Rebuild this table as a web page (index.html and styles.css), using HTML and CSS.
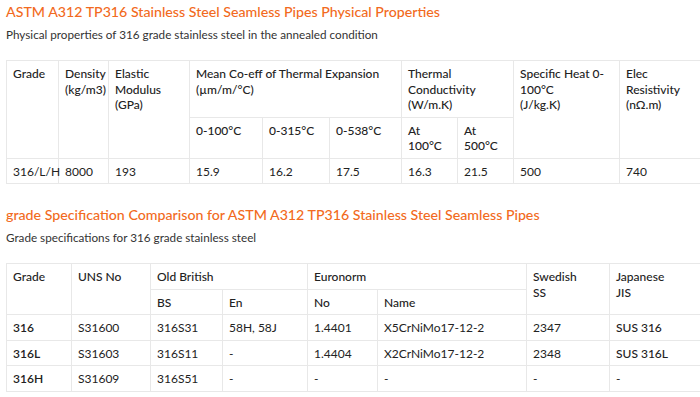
FILE: index.html
```html
<!DOCTYPE html>
<html>
<head>
<meta charset="utf-8">
<link rel="stylesheet" href="styles.css">
</head>
<body>
<section class="block">
  <h2 class="title">ASTM A312 TP316 Stainless Steel Seamless Pipes Physical Properties</h2>
  <p class="sub">Physical properties of 316 grade stainless steel in the annealed condition</p>
  <table class="tbl t1">
    <colgroup>
      <col class="c52"><col class="c50"><col class="c81"><col class="c73"><col class="c67"><col class="c72"><col class="c56"><col class="c56"><col class="c106"><col class="c83">
    </colgroup>
    <tr class="h">
      <th rowspan="2">Grade</th>
      <th rowspan="2">Density<br>(kg/m3)</th>
      <th rowspan="2">Elastic<br>Modulus<br>(GPa)</th>
      <th colspan="3">Mean Co-eff of Thermal Expansion<br>(µm/m/°C)</th>
      <th colspan="2">Thermal<br>Conductivity<br>(W/m.K)</th>
      <th rowspan="2">Specific Heat 0-100°C<br>(J/kg.K)</th>
      <th rowspan="2">Elec<br>Resistivity<br>(nΩ.m)</th>
    </tr>
    <tr class="h">
      <th>0-100°C</th>
      <th>0-315°C</th>
      <th>0-538°C</th>
      <th>At<br>100°C</th>
      <th>At<br>500°C</th>
    </tr>
    <tr>
      <td>316/L/H</td><td>8000</td><td>193</td><td>15.9</td><td>16.2</td><td>17.5</td><td>16.3</td><td>21.5</td><td>500</td><td>740</td>
    </tr>
  </table>
</section>
<section class="block b2">
  <h2 class="title">grade Specification Comparison for ASTM A312 TP316 Stainless Steel Seamless Pipes</h2>
  <p class="sub">Grade specifications for 316 grade stainless steel</p>
  <table class="tbl t2">
    <colgroup>
      <col class="c65"><col class="c79"><col class="c72"><col class="c85"><col class="c70"><col class="c149"><col class="c83"><col class="c93">
    </colgroup>
    <tr class="h">
      <th rowspan="2">Grade</th>
      <th rowspan="2">UNS No</th>
      <th colspan="2">Old British</th>
      <th colspan="2">Euronorm</th>
      <th rowspan="2">Swedish<br>SS</th>
      <th rowspan="2">Japanese<br>JIS</th>
    </tr>
    <tr class="h">
      <th>BS</th><th>En</th><th>No</th><th>Name</th>
    </tr>
    <tr>
      <td class="g">316</td><td>S31600</td><td>316S31</td><td>58H, 58J</td><td>1.4401</td><td>X5CrNiMo17-12-2</td><td>2347</td><td class="j">SUS 316</td>
    </tr>
    <tr>
      <td class="g">316L</td><td>S31603</td><td>316S11</td><td>-</td><td>1.4404</td><td>X2CrNiMo17-12-2</td><td>2348</td><td class="j">SUS 316L</td>
    </tr>
    <tr>
      <td class="g">316H</td><td>S31609</td><td>316S51</td><td>-</td><td>-</td><td>-</td><td>-</td><td>-</td>
    </tr>
  </table>
</section>
</body>
</html>
```
FILE: styles.css
```css
html, body {
  margin: 0;
  padding: 0;
  overflow: hidden;
  background: #fff;
}
body {
  padding: 0 0 0 6px;
  font-family: Lato, "Liberation Sans", sans-serif;
  color: #222;
  width: 700px;
}
.block { width: 696px; }
.title {
  margin: 0;
  padding-top: 2px;
  font-size: 14.2px;
  line-height: 20px;
  font-weight: 500;
  color: #f26a21;
}
.sub {
  margin: 4px 0 0;
  font-size: 11.7px;
  line-height: 16px;
  color: #333;
}
.tbl {
  border-collapse: collapse;
  table-layout: fixed;
  width: 696px;
  margin-top: 18px;
  font-size: 12px;
  line-height: 15.5px;
}
.tbl th, .tbl td {
  border: 1px solid #e8e8e8;
  padding: 5px 6px 4px;
  text-align: left;
  vertical-align: top;
}
.tbl th { font-weight: 500; }
.tbl td { font-weight: 400; }
.tbl td.g { font-weight: 600; }
.tbl td.j { font-weight: 500; }
.b2 { margin-top: 19px; }
.c52 { width: 52px; }
.c50 { width: 50px; }
.c81 { width: 81px; }
.c73 { width: 73px; }
.c67 { width: 67px; }
.c72 { width: 72px; }
.c56 { width: 56px; }
.c106 { width: 106px; }
.c83 { width: 83px; }
.c65 { width: 65px; }
.c79 { width: 79px; }
.c85 { width: 85px; }
.c70 { width: 70px; }
.c149 { width: 149px; }
.c93 { width: 93px; }
```
